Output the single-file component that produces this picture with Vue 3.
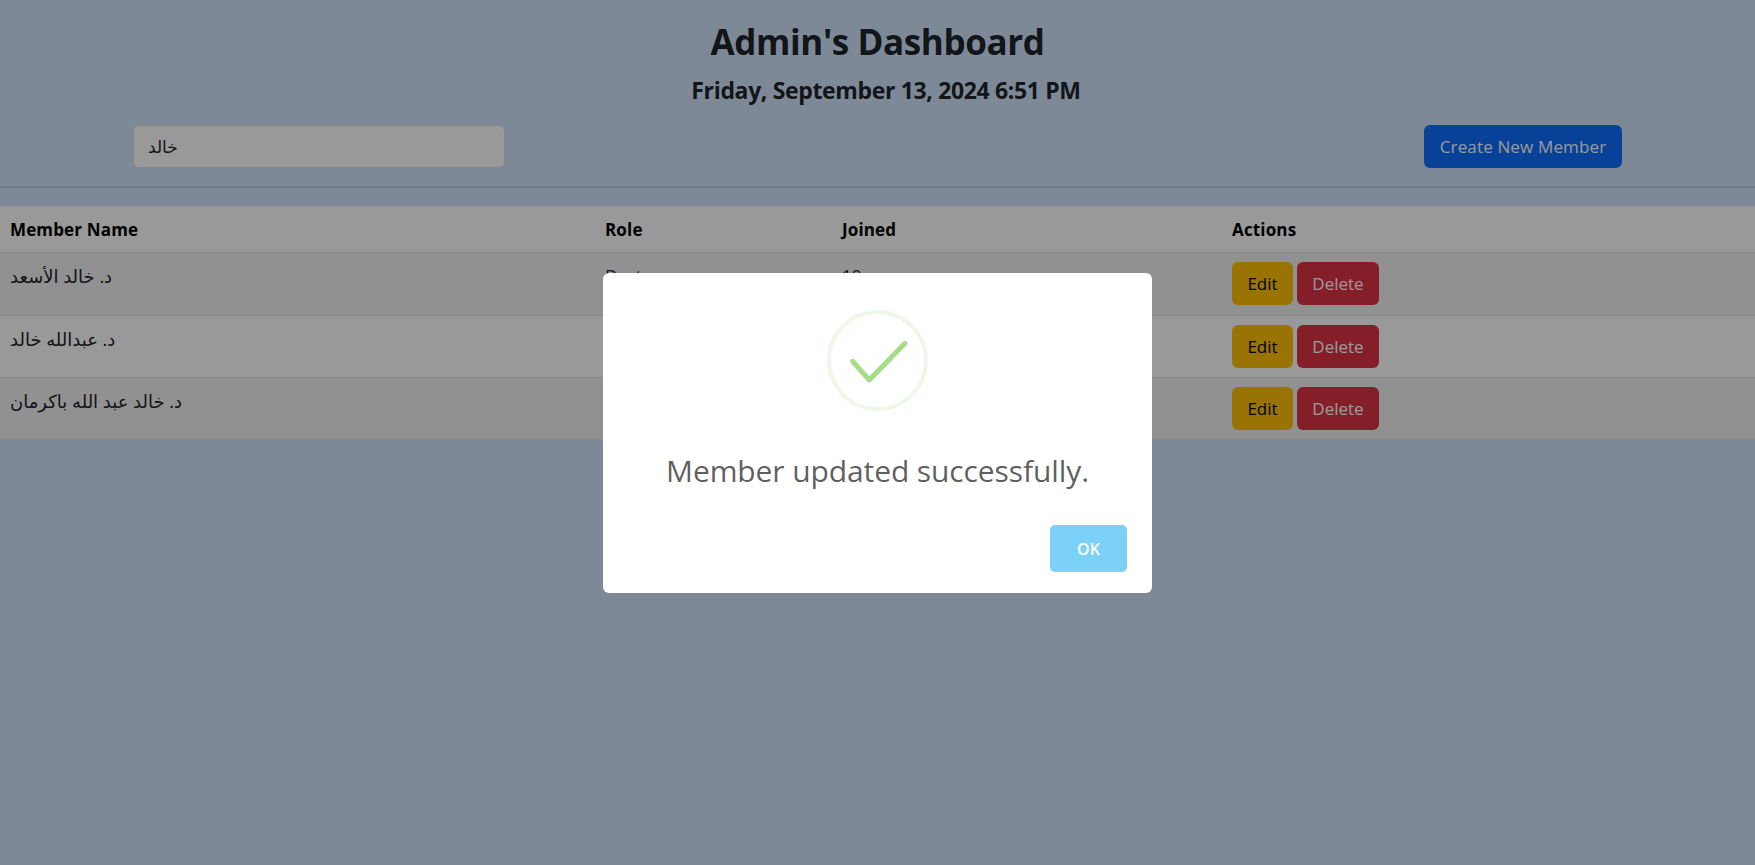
<script setup>
const members = [
  { name: 'د. خالد الأسعد', role: 'Doctor', joined: '19' },
  { name: 'د. عبدالله خالد', role: 'Doctor', joined: '19' },
  { name: 'د. خالد عبد الله باكرمان', role: 'Doctor', joined: '19' }
]
</script>

<template>
  <div class="page">
    <header class="head">
      <h1 class="title">Admin's Dashboard</h1>
      <h2 class="date">Friday, September 13, 2024 6:51 PM</h2>
    </header>
    <div class="toolbar">
      <input class="search" value="خالد" />
      <button class="btn btn-blue">Create New Member</button>
    </div>
    <hr class="rule" />
    <table class="table">
      <thead>
        <tr>
          <th class="c1">Member Name</th>
          <th class="c2">Role</th>
          <th class="c3">Joined</th>
          <th>Actions</th>
        </tr>
      </thead>
      <tbody>
        <tr v-for="m in members" :key="m.name">
          <td class="name">{{ m.name }}</td>
          <td>{{ m.role }}</td>
          <td>{{ m.joined }}</td>
          <td class="actions">
            <button class="btn btn-yellow">Edit</button>
            <button class="btn btn-red">Delete</button>
          </td>
        </tr>
      </tbody>
    </table>
    <div class="overlay">
      <div class="modal">
        <svg class="icon" viewBox="0 0 101 101" width="101" height="101">
          <circle cx="50.5" cy="50.5" r="48.5" fill="none" stroke="#a5dc86" stroke-opacity="0.2" stroke-width="4" />
          <path d="M25.7 51.3 L42.3 70 L78 33.3" fill="none" stroke="#a5dc86" stroke-width="5" stroke-linecap="round" stroke-linejoin="round" />
        </svg>
        <p class="msg">Member updated successfully.</p>
        <div class="footer">
          <button class="ok">OK</button>
        </div>
      </div>
    </div>
  </div>
</template>

<style>
html, body { margin: 0; background: #d2e4fe; }
</style>

<style scoped>
.page {
  position: relative;
  min-height: 865px;
  font-family: "Open Sans", "DejaVu Sans", sans-serif;
  color: #212529;
  overflow: hidden;
}
.head { text-align: center; padding-top: 20px; }
.title { margin: 0; font-size: 35px; line-height: 44px; font-weight: 700; letter-spacing: -0.4px; }
.date { margin: 11px 0 0; padding-left: 17px; font-size: 23px; line-height: 30px; font-weight: 700; letter-spacing: -0.35px; }
.toolbar {
  display: flex;
  justify-content: space-between;
  align-items: center;
  padding: 20px 133px 0 133px;
}
.search {
  box-sizing: border-box;
  width: 372px;
  height: 43px;
  border: 1px solid #dee2e6;
  border-radius: 6px;
  background: #fff;
  padding: 0 14px;
  font: inherit;
  font-size: 17px;
  color: #212529;
  outline: none;
}
.btn {
  box-sizing: border-box;
  height: 43px;
  border: 0;
  border-radius: 6px;
  padding: 0;
  font: inherit;
  font-size: 17px;
}
.btn-blue { background: #0d6efd; color: #fff; width: 198px; letter-spacing: 0.15px; }
.btn-yellow { background: #ffc107; color: #000; width: 61px; }
.btn-red { background: #dc3545; color: #fff; width: 82px; }
.rule { border: 0; border-top: 2px solid #b9cbe6; margin: 18px 0; }
.table { width: 100%; border-collapse: collapse; table-layout: fixed; background: #fff; font-size: 17px; }
.table th, .table td {
  text-align: left;
  vertical-align: top;
  padding: 0 10px;
  border-bottom: 1px solid #dee2e6;
}
.table th { padding-top: 2px; line-height: 44px; font-weight: 700; color: #000; letter-spacing: 0.15px; box-sizing: border-box; }
.table td { padding-top: 10px; padding-bottom: 8px; line-height: 26px; color: #212529; }
.table td.name { font-size: 18px; }
.table tbody tr:nth-child(odd) td { background: #f2f2f2; }
.c1 { width: 595px; }
.c2 { width: 237px; }
.c3 { width: 390px; }
.table td.actions { padding-top: 9px; padding-bottom: 9px; line-height: 0; }
.table tbody tr:first-child td.actions { padding-bottom: 10px; }
.actions .btn + .btn { margin-left: 4px; }
.overlay {
  position: absolute;
  inset: 0;
  background: rgba(0, 0, 0, 0.4);
}
.modal {
  position: absolute;
  left: 603px;
  top: 273px;
  box-sizing: border-box;
  width: 549px;
  height: 320px;
  background: #fff;
  border-radius: 6px;
  display: flex;
  flex-direction: column;
  align-items: center;
  padding-top: 37px;
}
.icon { display: block; flex: none; }
.msg {
  margin: 39px 0 0;
  font-size: 30px;
  line-height: 42px;
  font-weight: 500;
  color: rgba(0, 0, 0, 0.65);
  letter-spacing: -0.1px;
}
.footer { align-self: stretch; display: flex; justify-content: flex-end; padding: 33px 25px 0 0; }
.ok {
  width: 77px;
  height: 47px;
  border: 0;
  border-radius: 5px;
  background: #7cd1f9;
  color: #fff;
  font: inherit;
  font-size: 16px;
  font-weight: 600;
}
</style>
